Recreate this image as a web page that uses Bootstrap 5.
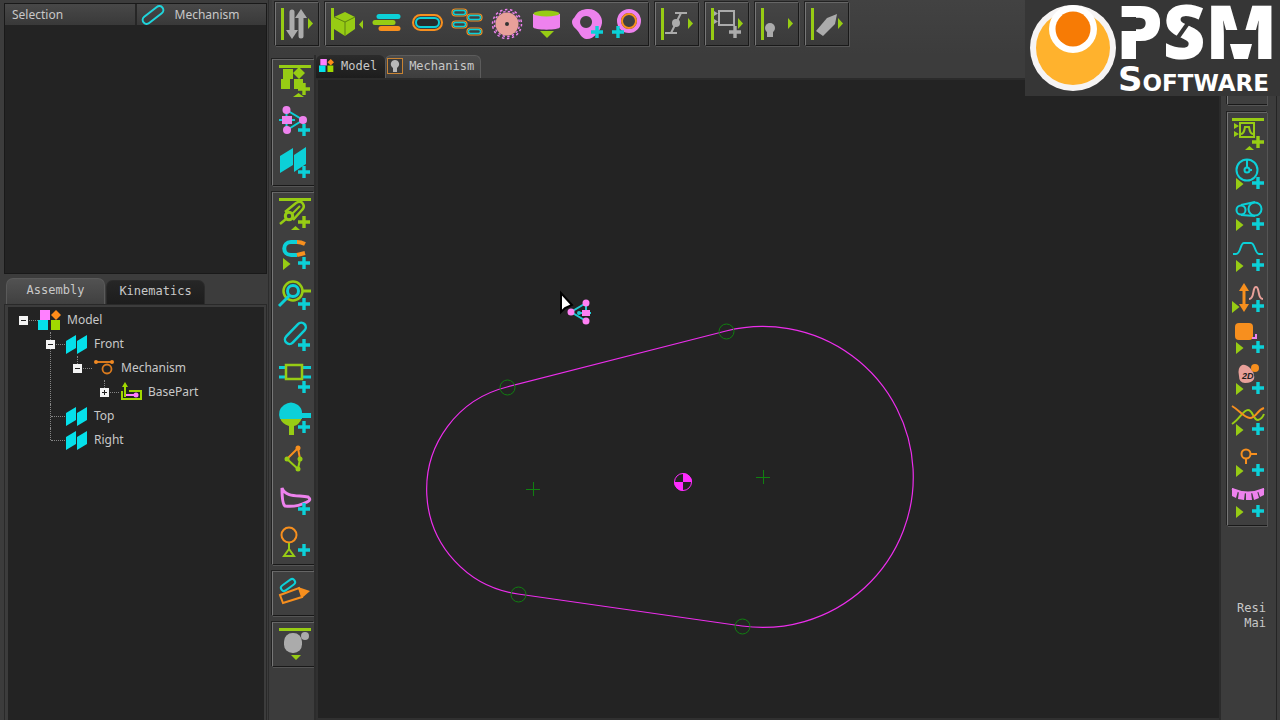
<!DOCTYPE html>
<html lang="en">
<head>
<meta charset="utf-8">
<meta name="viewport" content="width=device-width, initial-scale=1">
<title>Mechanism editor</title>
<link href="https://cdn.jsdelivr.net/npm/bootstrap@5.3.0/dist/css/bootstrap.min.css" rel="stylesheet">
<style>
:root{--chrome:#3c3c3c;--sheet:#232323;--edge:#191919;--cyan:#0cd0d8;--lime:#97cc14;--violet:#ee82ee;--orange:#f78f1e;--grey:#ababab;--rose:#e8a09a}
body{background:var(--chrome);color:#c8c8c8;font:12px/16px "Noto Sans",sans-serif;overflow:hidden}
button{background:none;border:0;padding:0;color:inherit;font:inherit}
svg{display:block;flex:none}
.mono{font-family:"DejaVu Sans Mono",monospace}
.sidebar{width:269px;padding:3px 1px 0 4px;border-right:1px solid #2c2c2c}
.workarea{margin-left:3px}
.selbox{height:271px;background:var(--sheet);border:1px solid var(--edge)}
.selhead{width:100%;height:21px;table-layout:fixed;background:linear-gradient(#484848,#393939)}
.selhead th{font-weight:400;padding:0 7px;vertical-align:middle}
.selhead th+th{border-left:2px solid #262626;padding:0 4px}
.selhead th svg{margin-right:9px}
.sidetabs{margin-top:4px;padding-left:2px;gap:1px}
.sidetabs button{width:99px;height:26px;padding-bottom:3px;border:1px solid #222;border-bottom:0;border-radius:7px 7px 0 0;background:linear-gradient(#262626,#1d1d1d)}
.sidetabs .active{background:linear-gradient(#525252,#404040);border-color:#5a5a5a}
.sidetabs button:not(.active){height:24px;border-color:#2b2b2b}
.treebox{border:1px solid #292929;border-bottom:0;padding:2px 2px 0 3px}
.treeview{background:var(--sheet);padding:1px 0 0 11px;height:100%}
.treeview ul{padding-left:27px}
.treeview li{position:relative}
.treeview ul li::before{content:"";position:absolute;left:4px;top:0;height:12px;border-left:1px dotted #858585}
.treeview ul li:not(:last-child)::before{height:100%}
.trow{height:24px;position:relative}
.trow::before{content:"";position:absolute;left:5px;top:12px;width:14px;border-top:1px dotted #858585}
.trow span{margin-left:6px}
.expander{width:9px;height:9px;background:#f4f4f4;position:relative;z-index:1;margin-right:10px;flex:none}
.expander svg{width:9px;height:9px}
.leafgap{margin-left:19px}
.topbar{height:55px;padding:2px 0 0 3px;gap:6px;background:linear-gradient(#424242,#3c3c3c)}
.toolset{border:1px solid var(--edge);border-top-color:#666;border-left-color:#777;padding:1px;background:linear-gradient(#454545,#3a3a3a);box-shadow:-1px -1px #222,1px 1px #555}
.topbar .toolset{height:44px}
.toolset button{width:40px;height:41px;display:block}
.toolstrip{width:42px;padding-top:4px;gap:6px}
.toolstrip .toolset{border-right:0;padding-right:0;background:#3f3f3f}
.workspace{border-left:2px solid #2c2c2c}
.doctabs{height:23px}
.doctabs button{height:23px;padding:0 8px 2px 3px;border-radius:6px 6px 0 0;background:linear-gradient(#2b2b2b,#1d1d1d);gap:7px}
.doctabs .active{background:linear-gradient(#4b4b4b,#3e3e3e);border:1px solid #5c5c5c;border-bottom:0;padding:0 6px 3px 1px;gap:6px}
.canvas{background:var(--sheet);border:2px solid #303030;border-top-color:#2b2b2b;border-right:0}
.rightbar{width:61px;border-left:2px solid #2b2b2b;padding-left:6px;position:relative}
.rightbar .toolset{width:40px;border-right:0;background:#3f3f3f;padding-right:0;padding-left:0}
.rightbar .toolset button{width:39px}
.rightbar::after{content:"";position:absolute;right:3px;top:0;bottom:0;border-left:1px solid #242424}
.cutset{height:50px;margin-bottom:7px}
.readout{width:39px;margin-top:75px;line-height:15px;text-align:right}
.brand{position:absolute;top:0;right:0;background:#363636;z-index:2}
.c{stroke:var(--cyan);fill:none}.g{stroke:var(--lime);fill:none}.v{stroke:var(--violet);fill:none}.o{stroke:var(--orange);fill:none}.y{stroke:var(--grey);fill:none}.r{stroke:var(--rose);fill:none}
.fc{fill:var(--cyan)}.fg{fill:var(--lime)}.fv{fill:var(--violet)}.fo{fill:var(--orange)}.fy{fill:var(--grey)}.fr{fill:var(--rose)}
.toolset svg{width:40px;height:41px;stroke-width:2}
.toolset svg.thick{stroke-width:5}
</style>
</head>
<body>
<svg width="0" height="0" class="position-absolute" aria-hidden="true">
<symbol id="plus" viewBox="0 0 12 12"><path d="M6 0V12M0 6H12" stroke="currentColor" stroke-width="3.4"/></symbol>
<symbol id="play" viewBox="0 0 8 12"><path d="M0 0V12L7.500 6Z" fill="#97cc14"/></symbol>
<symbol id="plane" viewBox="0 0 23 20"><path d="M1 7L11 1V14L1 20ZM12 7L22 1V14L12 20Z" fill="#05e0ea"/></symbol>
<symbol id="blocks" viewBox="0 0 23 20"><path d="M2 0H12V10H2Z" fill="#ff80ff"/><path d="M18 0L23 5L18 10L13 5Z" fill="#ff8c1a"/><path d="M0 10H10V20H0Z" fill="#05e0ea"/><path d="M13 10H22V20H13Z" fill="#a0d800"/></symbol>
<symbol id="bar" viewBox="0 0 40 41"><path d="M4 4H7V36H4Z" fill="#97cc14"/><path d="M31 14V25L36 19.500Z" fill="#97cc14"/></symbol>
</svg>

<div class="d-flex vh-100 position-relative">
<aside class="sidebar d-flex flex-column flex-shrink-0">
  <div class="selbox">
    <table class="selhead"><tr><th>Selection</th><th><div class="d-flex align-items-center"><svg width="25" height="20" viewBox="0 0 25 20"><rect x="0" y="6" width="24" height="8" rx="4" transform="rotate(-38 12 10)" fill="none" stroke="#1fd5dc" stroke-width="2"/></svg><span>Mechanism</span></div></th></tr></table>
  </div>
  <div class="sidetabs d-flex align-items-end mono" role="tablist">
    <button type="button" class="active" role="tab" aria-selected="true">Assembly</button>
    <button type="button" role="tab" aria-selected="false">Kinematics</button>
  </div>
  <div class="treebox flex-grow-1">
    <div class="treeview">
      <div class="trow d-flex align-items-center"><button type="button" class="expander" aria-label="Collapse Model"><svg viewBox="0 0 9 9"><path d="M2 4.500H7" stroke="#222"/></svg></button><svg width="23" height="20"><use href="#blocks"/></svg><span>Model</span></div>
      <ul class="list-unstyled mb-0">
        <li><div class="trow d-flex align-items-center"><button type="button" class="expander" aria-label="Collapse Front"><svg viewBox="0 0 9 9"><path d="M2 4.500H7" stroke="#222"/></svg></button><svg width="23" height="20"><use href="#plane"/></svg><span>Front</span></div>
          <ul class="list-unstyled">
            <li><div class="trow d-flex align-items-center"><button type="button" class="expander" aria-label="Collapse Mechanism"><svg viewBox="0 0 9 9"><path d="M2 4.500H7" stroke="#222"/></svg></button><svg width="23" height="20" viewBox="0 0 23 20"><path d="M3 4H20" stroke="#d97a1e" stroke-width="2"/><circle cx="4" cy="4" r="2" fill="#f08a24"/><circle cx="20" cy="4" r="2" fill="#f08a24"/><circle cx="15" cy="11" r="4.500" fill="none" stroke="#d97a1e" stroke-width="1.800"/></svg><span>Mechanism</span></div>
              <ul class="list-unstyled">
                <li><div class="trow d-flex align-items-center"><button type="button" class="expander" aria-label="Expand BasePart"><svg viewBox="0 0 9 9"><path d="M2 4.500H7M4.500 2V7" stroke="#222"/></svg></button><svg width="23" height="20" viewBox="0 0 23 20"><path d="M10 9H22V17H3V9M6 15V3" fill="none" stroke="#a0d800" stroke-width="2"/><path d="M3 5L6 0L9 5Z" fill="#a0d800"/><path d="M7 13H17" stroke="#ff80ff" stroke-width="2"/><circle cx="17" cy="13" r="2.500" fill="#ff80ff"/></svg><span>BasePart</span></div></li>
              </ul>
            </li>
          </ul>
        </li>
        <li><div class="trow d-flex align-items-center"><svg class="leafgap" width="23" height="20"><use href="#plane"/></svg><span>Top</span></div></li>
        <li><div class="trow d-flex align-items-center"><svg class="leafgap" width="23" height="20"><use href="#plane"/></svg><span>Right</span></div></li>
      </ul>
    </div>
  </div>
</aside>

<main class="workarea d-flex flex-column flex-grow-1">
  <div class="topbar d-flex align-items-start">
    <div class="toolset"><button type="button" aria-label="Sort"><svg viewBox="0 0 40 41"><use href="#bar"/><path class="y" d="M15 8V28" stroke-width="5" stroke-linecap="round"/><path class="fy" d="M9 26H21L15 35Z"/><path class="y" d="M24 13V32" stroke-width="5" stroke-linecap="round"/><path class="fy" d="M18 14H30L24 5Z"/></svg></button></div>
    <div class="toolset d-flex">
      <button type="button" aria-label="Solids"><svg viewBox="0 0 40 41"><path class="fg" d="M4 4H7V36H4ZM36 16V25L32 20.500ZM18 8L28 13V25L18 32L7 25V13Z"/><path d="M7 13L18 18L28 13M18 18V32" fill="none" stroke="#5c8210" stroke-width="1"/></svg></button>
      <button type="button" aria-label="Layers"><svg class="thick" viewBox="0 0 40 41" stroke-linecap="round"><path class="c" d="M12 12.500H31"/><path class="g" d="M8 18.500H26"/><path class="o" d="M14 24.500H31"/></svg></button>
      <button type="button" aria-label="Slot profile"><svg viewBox="0 0 40 41"><rect x="6" y="11" width="29" height="15" rx="7.500" class="o"/><rect x="9" y="14" width="23" height="9" rx="4.500" class="c" style="fill:#262c2d"/></svg></button>
      <button type="button" aria-label="Pattern"><svg viewBox="0 0 40 41"><g id="pat"><rect class="o" x="5" y="5" width="15" height="7" rx="3.500" stroke-width="1.200"/><rect class="c" x="6.500" y="6.500" width="12" height="4" rx="2" stroke-width="1.500"/></g><use href="#pat" x="15" y="5"/><use href="#pat" y="12"/><use href="#pat" x="15" y="19"/></svg></button>
      <button type="button" aria-label="Gear"><svg viewBox="0 0 40 41"><circle class="fr" cx="20" cy="20" r="11.500"/><circle class="v" cx="20" cy="20" r="14.500" stroke-width="1.500" stroke-dasharray="2.500 2.560"/><circle class="v" cx="20" cy="20" r="12.500" stroke-width="1.400" stroke-dasharray="2.360" stroke-dashoffset="2"/><circle cx="20" cy="20" r="2" fill="#333"/></svg></button>
      <button type="button" aria-label="Extrude"><svg viewBox="0 0 40 41"><path class="fv" d="M6 10V23C6 26.500 33 26.500 33 23V10Z"/><ellipse class="fg" cx="19.500" cy="9.500" rx="13" ry="3"/><path class="fg" d="M13 27H27L20 34Z"/></svg></button>
      <button type="button" aria-label="Add cam"><svg viewBox="0 0 40 41"><path class="fv" fill-rule="evenodd" d="M20 5C29 4 36 12 35 19C34 27 26 36 19 35C14 34 13 29 9 25C5 22 4 17 6 15C9 13 9 6 20 5ZM19 12a6 6 0 1 0 .1 0Z"/><use href="#plus" x="24" y="22" width="12" height="12" color="#0cd0d8"/></svg></button>
      <button type="button" aria-label="Add ring"><svg viewBox="0 0 40 41"><circle class="v" cx="22" cy="17" r="10" stroke-width="4"/><circle class="o" cx="22" cy="17" r="7"/><use href="#plus" x="5" y="22" width="12" height="12" color="#0cd0d8"/></svg></button>
    </div>
    <div class="toolset"><button type="button" aria-label="Linkage"><svg viewBox="0 0 40 41"><use href="#bar"/><path class="y" d="M8 29H20M18 9H30M14 29L24 9"/><circle class="fy" cx="19" cy="19" r="4"/></svg></button></div>
    <div class="toolset"><button type="button" aria-label="Add frame"><svg viewBox="0 0 40 41"><use href="#bar"/><rect class="y" x="12" y="7" width="15" height="14"/><path class="fy" d="M7 7L11 9.500L7 12ZM7 15L11 17.500L7 20Z"/><use href="#plus" x="22" y="22" width="12" height="12" color="#ababab"/></svg></button></div>
    <div class="toolset"><button type="button" aria-label="Key"><svg viewBox="0 0 40 41"><use href="#bar"/><circle class="fy" cx="13" cy="24" r="5"/><path class="fy" d="M10 25H16V33H10Z"/></svg></button></div>
    <div class="toolset"><button type="button" aria-label="Draw"><svg viewBox="0 0 40 41"><use href="#bar"/><path class="fy" d="M9 27L20 14L30 10L28 20L16 32Z"/></svg></button></div>
  </div>

  <div class="d-flex flex-grow-1">
    <div class="toolstrip d-flex flex-column flex-shrink-0">
      <div class="toolset">
        <button type="button" aria-label="Add model"><svg viewBox="0 0 40 41"><path class="fg" d="M5 4H37V7H5ZM9 8H19V18H9ZM25 6L31 12L25 18L19 12ZM7 18H16V28H7ZM20 18H29V28H20ZM19 36L24.500 32L30 36Z"/><use href="#plus" x="24" y="22" width="12" height="12" color="#97cc14"/></svg></button>
        <button type="button" aria-label="Add mechanism"><svg viewBox="0 0 40 41"><path class="c" d="M5 18H21M12.500 8V28M12.500 8L29 18L13 28"/><g class="fv"><circle cx="12.500" cy="8" r="4"/><circle cx="29" cy="18" r="4"/><circle cx="13" cy="28" r="4"/><rect x="8" y="14" width="10" height="8"/></g><use href="#plus" x="24" y="22" width="12" height="12" color="#0cd0d8"/></svg></button>
        <button type="button" aria-label="Add plane"><svg viewBox="0 0 40 41"><path class="fc" d="M6 13L19 5V22L6 30ZM20 12L32 4V21L20 29Z"/><use href="#plus" x="24" y="23" width="12" height="12" color="#0cd0d8"/></svg></button>
      </div>
      <div class="toolset">
        <button type="button" aria-label="Add part"><svg viewBox="0 0 40 41"><path class="fg" d="M5 4H37V7H5ZM17 36L21.500 32L26 36Z"/><path class="g" d="M6 30L12 25M11 18L22 9C28 5 32 12 28 16L19 26" stroke-width="2.500"/><circle class="g" cx="15" cy="22" r="3.700" stroke-width="3"/><path class="g" d="M18 20L26 12"/><use href="#plus" x="24" y="22" width="12" height="12" color="#97cc14"/></svg></button>
        <button type="button" aria-label="Add magnet joint"><svg viewBox="0 0 40 41"><g stroke-width="4"><path class="c" d="M23 7H17C8 7 8 20 17 20H23"/><path class="o" d="M23 7Q27 7 31 9M23 20L31 18"/></g><use href="#play" x="9" y="23" width="8" height="12"/><use href="#plus" x="24" y="22" width="12" height="12" color="#0cd0d8"/></svg></button>
        <button type="button" aria-label="Add pin joint"><svg viewBox="0 0 40 41"><circle class="g" cx="19" cy="15" r="9.500" stroke-width="2.500"/><path class="g" d="M28 15H37" stroke-width="3"/><circle class="c" cx="19" cy="15" r="5.500" stroke-width="3"/><path class="c" d="M15 20L5 30" stroke-width="3"/><use href="#plus" x="24" y="22" width="12" height="12" color="#0cd0d8"/></svg></button>
        <button type="button" aria-label="Add link"><svg viewBox="0 0 40 41"><rect class="c" x="8" y="12" width="26" height="9" rx="4.500" transform="rotate(-46 21 16)" stroke-width="2.500"/><use href="#plus" x="24" y="22" width="12" height="12" color="#0cd0d8"/></svg></button>
        <button type="button" aria-label="Add slider"><svg viewBox="0 0 40 41"><path class="c" d="M5 9.500H37M5 19H37" stroke-width="3"/><rect class="g" x="12" y="7" width="16" height="14" style="fill:#3f3f3f" stroke-width="2.500"/><use href="#plus" x="24" y="23" width="12" height="12" color="#0cd0d8"/></svg></button>
        <button type="button" aria-label="Add cam follower"><svg viewBox="0 0 40 41"><path class="fg" d="M6 19H28Q25 26 20 27V36H15V27Q8 25 6 19Z"/><path class="fc" d="M6 20Q3 11 10 6Q17 1 24 6Q28 9 28 14H37V19H28V20Z"/><use href="#plus" x="24" y="22" width="12" height="12" color="#0cd0d8"/></svg></button>
        <button type="button" aria-label="Triangle"><svg viewBox="0 0 40 41"><path class="o" d="M13 19L24 8L26 19"/><path class="g" d="M13 19L24 29L26 19"/><circle class="fo" cx="24" cy="8" r="2.500"/><g class="fg"><circle cx="13" cy="19" r="2.500"/><circle cx="26" cy="19" r="2.500"/><circle cx="24" cy="29" r="2.500"/></g></svg></button>
        <button type="button" aria-label="Add curve"><svg viewBox="0 0 40 41"><path class="v" d="M8 7C12 17 25 14 34 16Q38 19 33 21C25 25 18 26 11 25Q8 23 8 7Z" stroke-width="3"/><use href="#plus" x="24" y="22" width="12" height="12" color="#0cd0d8"/></svg></button>
        <button type="button" aria-label="Add pendulum"><svg viewBox="0 0 40 41"><circle class="o" cx="15" cy="13" r="7.500"/><path class="g" d="M15 21V27L10 34H20L15 27"/><use href="#plus" x="24" y="22" width="12" height="12" color="#0cd0d8"/></svg></button>
      </div>
      <div class="toolset"><button type="button" aria-label="Edit part"><svg viewBox="0 0 40 41"><rect class="c" x="6" y="9" width="16" height="6" rx="3" transform="rotate(-36 14 12)"/><path class="o" d="M6 22L25 15L28 24L9 30Z"/><path class="fo" d="M24 14L36 18L28 25Z"/></svg></button></div>
      <div class="toolset"><button type="button" aria-label="Mass properties"><svg viewBox="0 0 40 41"><path class="fg" d="M5 4H37V7H5ZM17 31H27L22 36Z"/><rect class="fy" x="10" y="9" width="18" height="20" rx="8.500"/><circle class="fy" cx="31" cy="12" r="4"/></svg></button></div>
    </div>

    <section class="workspace d-flex flex-column flex-grow-1">
      <div class="doctabs d-flex mono" role="tablist">
        <button type="button" class="d-flex align-items-center" role="tab" aria-selected="false"><svg width="15" height="13"><use href="#blocks"/></svg>Model</button>
        <button type="button" class="active d-flex align-items-center" role="tab" aria-selected="true"><svg width="16" height="16" viewBox="0 0 16 16"><rect x=".5" y=".5" width="15" height="15" fill="#3a3a3a" stroke="#c98332"/><path d="M6 14V10C2 7 4 2 8 2S14 7 10 10V14Z" fill="#b8b8b8"/></svg>Mechanism</button>
      </div>
      <div class="canvas flex-grow-1">
        <svg width="100%" height="100%" role="img" aria-label="Cam profile sketch">
          <path d="M189 307L408 251A150.500 150.500 0 1 1 424 546L200 514A105.500 105.500 0 0 1 189 307Z" fill="none" stroke="#ec2eec" stroke-width="1.200"/>
          <g fill="none" stroke="#108010" stroke-width="1"><circle cx="189.500" cy="307.500" r="7.500"/><circle cx="408.500" cy="251.500" r="7.500"/><circle cx="200.500" cy="514.500" r="7.500"/><circle cx="424.500" cy="546.500" r="7.500"/><path d="M208 409.500H222M215.500 402V416M438 397.500H452M445.500 390V404"/></g>
          <g transform="translate(365 402)"><circle r="8.500" fill="none" stroke="#ff2cff"/><path d="M0 0V-9A9 9 0 0 1 9 0ZM0 0V9A9 9 0 0 1 -9 0Z" fill="#ff2cff"/></g>
          <path d="M243 213V232L247 228L254 225Z" fill="#fff" stroke="#000" stroke-width="2"/>
          <path d="M268 223L253 232L268 241M268 223V233M262 233H273" fill="none" stroke="#1fc9d2" stroke-width="2"/>
          <g fill="#ff80f4"><circle cx="268" cy="223" r="3.500"/><circle cx="253" cy="232" r="3.500"/><circle cx="268" cy="241" r="3.500"/><path d="M264 230H272V236H264Z"/></g><circle cx="261" cy="233" r="2" fill="#1fc9d2"/>
        </svg>
      </div>
    </section>

    <div class="rightbar flex-shrink-0">
      <div class="toolset cutset"></div>
      <div class="toolset">
        <button type="button" aria-label="Add motion graph"><svg viewBox="0 0 40 41"><path class="fg" d="M4 4H36V7H4ZM6 9L11 12L6 15ZM6 17L11 20L6 23ZM17 36L21.500 32L26 36Z"/><rect class="g" x="12" y="9" width="14" height="14"/><path class="g" d="M13 20Q16 20 17 13H21Q22 20 25 20"/><use href="#plus" x="24" y="22" width="12" height="12" color="#97cc14"/></svg></button>
        <button type="button" aria-label="Add rotary motion"><svg viewBox="0 0 40 41"><circle class="c" cx="19" cy="15" r="10.500"/><circle class="c" cx="19" cy="15" r="2.500"/><path class="c" d="M19 5V13M21 15H24"/><use href="#play" x="8" y="23" width="8" height="12"/><use href="#plus" x="24" y="22" width="12" height="12" color="#0cd0d8"/></svg></button>
        <button type="button" aria-label="Add belt"><svg viewBox="0 0 40 41"><circle class="c" cx="13" cy="14" r="4.500"/><circle class="c" cx="27" cy="13" r="6.500"/><path class="c" d="M13 9L27 6M13 19L27 20"/><use href="#play" x="8" y="23" width="8" height="12"/><use href="#plus" x="24" y="22" width="12" height="12" color="#0cd0d8"/></svg></button>
        <button type="button" aria-label="Add motion law"><svg viewBox="0 0 40 41"><path class="c" d="M5 17H8C13 17 12 6 16 6H23C27 6 27 17 31 17H35"/><use href="#play" x="8" y="23" width="8" height="12"/><use href="#plus" x="24" y="22" width="12" height="12" color="#0cd0d8"/></svg></button>
        <button type="button" aria-label="Add stroke motion"><svg viewBox="0 0 40 41"><path class="o" d="M16 10V30" stroke-width="3"/><path class="fo" d="M11 13L16 5L21 13ZM11 26L16 34L21 26Z"/><path class="r" d="M21 21C27 21 24 9 28 9S29 21 35 21"/><use href="#play" x="4" y="23" width="8" height="12"/><use href="#plus" x="24" y="22" width="12" height="12" color="#0cd0d8"/></svg></button>
        <button type="button" aria-label="Add load"><svg viewBox="0 0 40 41"><rect class="fo" x="7" y="4" width="18" height="17" rx="4"/><path class="v" d="M24 19H28V15"/><use href="#play" x="8" y="23" width="8" height="12"/><use href="#plus" x="24" y="22" width="12" height="12" color="#0cd0d8"/></svg></button>
        <button type="button" aria-label="Add 2D cam"><svg viewBox="0 0 40 41"><path class="fr" d="M14 5Q18 4 23 9Q27 14 26 19Q24 23 17 23Q11 23 11 16Q9 8 14 5Z"/><circle class="fo" cx="27" cy="8" r="4"/><text x="14" y="19" font-family="Liberation Sans" font-size="9" font-weight="700" font-style="italic" fill="#222">2D</text><use href="#play" x="8" y="23" width="8" height="12"/><use href="#plus" x="24" y="22" width="12" height="12" color="#0cd0d8"/></svg></button>
        <button type="button" aria-label="Add curve pair"><svg viewBox="0 0 40 41"><path class="g" d="M4 23C12 18 15 9 20 9S25 19 30 19Q34 18 36 13"/><path class="o" d="M4 5C11 9 16 17 22 17S29 9 36 7"/><use href="#play" x="8" y="23" width="8" height="12"/><use href="#plus" x="24" y="22" width="12" height="12" color="#0cd0d8"/></svg></button>
        <button type="button" aria-label="Add point"><svg viewBox="0 0 40 41"><circle class="o" cx="18" cy="12" r="4.500"/><path class="o" d="M23 12H29M18 17V22"/><use href="#play" x="8" y="23" width="8" height="12"/><use href="#plus" x="24" y="22" width="12" height="12" color="#0cd0d8"/></svg></button>
        <button type="button" aria-label="Add contact force"><svg viewBox="0 0 40 41"><path class="fv" d="M4 5L10 8L8 15L4 13ZM11 8L17 9L16 17L10 16ZM18 9L23 9L24 17L18 17ZM24 9L29 8L31 15L26 17ZM30 8L36 5V12L32 14Z"/><path class="v" d="M4 6Q20 13 36 6"/><use href="#play" x="8" y="23" width="8" height="12"/><use href="#plus" x="24" y="22" width="12" height="12" color="#0cd0d8"/></svg></button>
      </div>
      <div class="readout mono">Resi<br>Mai</div>
    </div>
  </div>
</main>

<svg class="brand" width="255" height="96" viewBox="0 0 255 96" role="img" aria-label="PSM Software">
  <circle cx="48" cy="48" r="43" fill="#f6f4f4"/><circle cx="48" cy="48" r="37" fill="#ffb22d"/><circle cx="48" cy="29" r="24" fill="#fff"/><circle cx="48" cy="29" r="17.500" fill="#f77b05"/>
  <g fill="#fff" font-weight="800">
  <text x="91" y="59" font-size="74" font-family="'Open Sans','Noto Sans',sans-serif">PSM</text>
  <text x="93" y="91" font-size="34" font-weight="700" font-family="'DejaVu Sans',sans-serif">S<tspan font-size="23">OFTWARE</tspan></text></g>
  <!-- stencil gaps in the wordmark -->
  <path d="M94 17H111V31H94ZM200 30H233V44H200Z" fill="#363636"/>
  <path d="M166 19L149 43" stroke="#363636" stroke-width="4"/>
</svg>
</div>
<script src="https://cdn.jsdelivr.net/npm/bootstrap@5.3.0/dist/js/bootstrap.bundle.min.js"></script>
</body>
</html>
